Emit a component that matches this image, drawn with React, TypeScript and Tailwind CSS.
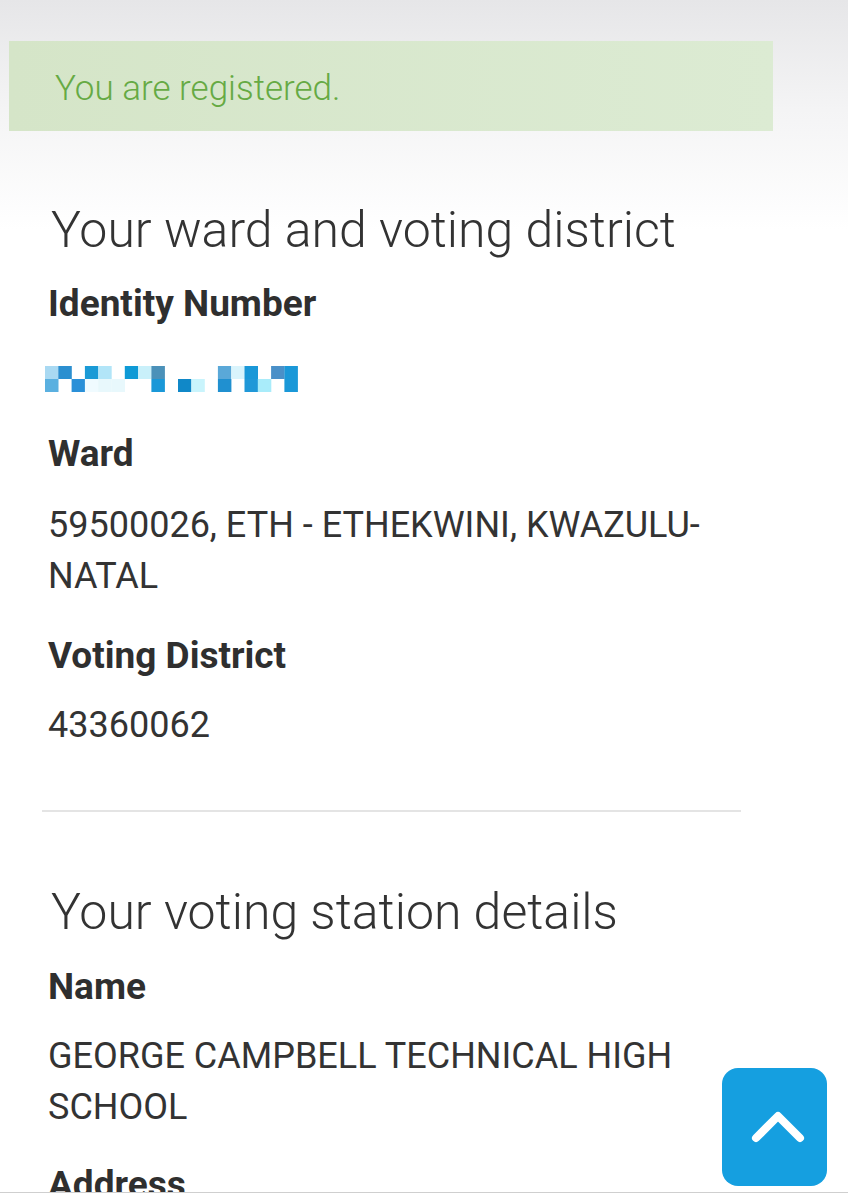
const idPixels: [number, number, string][] = [
  // [column, row, colour]
  [0, 0, "#a9d9f2"], [1, 0, "#2b8fd0"], [3, 0, "#1a9ad6"], [4, 0, "#b2e5f8"], [6, 0, "#0e9ad6"],
  [7, 0, "#c9f0fa"], [8, 0, "#4b91b9"], [13, 0, "#5aa8d8"], [14, 0, "#d9f4fc"], [15, 0, "#1a98d8"],
  [17, 0, "#4a90c8"], [18, 0, "#1a98d8"],
  [0, 1, "#5ab0e0"], [2, 1, "#2a90d8"], [3, 1, "#f0fbff"], [4, 1, "#e8f8fc"], [5, 1, "#e8f8fc"],
  [8, 1, "#1a98d8"], [10, 1, "#1088c8"], [11, 1, "#c9f4fc"], [13, 1, "#2090d0"], [15, 1, "#2098d8"],
  [16, 1, "#a9ecfa"], [18, 1, "#1a98d8"],
]

function BlurredId() {
  return (
    <svg width="254" height="26" viewBox="0 0 254 26" className="block">
      {idPixels.map(([c, r, fill], i) => (
        <rect key={i} x={c * 13.3} y={r * 13} width="13.5" height="13" fill={fill} />
      ))}
    </svg>
  )
}

function Field({ label, children, top }: { label: string; children: React.ReactNode; top: string }) {
  return (
    <div className={top}>
      <h3 className="text-[37px] leading-[40px] font-bold text-[#2f2f2f]">{label}</h3>
      {children}
    </div>
  )
}

export default function App() {
  return (
    <div
      className="relative w-[848px] h-[1200px] overflow-hidden bg-white bg-[linear-gradient(to_bottom,#e6e6e8_0px,#f4f4f5_110px,#ffffff_230px)]"
      style={{ fontFamily: "Roboto, 'Liberation Sans', sans-serif" }}
    >
      <div className="h-[1193px] overflow-hidden border-b border-[#cfcfcf]">
        <div className="pt-[41px] pl-[9px]">
          <div className="w-[764px] h-[90px] flex items-center pl-[46px] pt-[6px] bg-gradient-to-r from-[#d5e5c8] to-[#dcebd3]">
            <p className="text-[35px] font-light text-[#66aa44]">You are registered.</p>
          </div>
        </div>

        <main className="pl-[48px] w-[741px]">
          <h2 className="mt-[71px] text-[50px] leading-[56px] font-light text-[#333] pl-[3px]">
            Your ward and voting district
          </h2>

          <Field label="Identity Number" top="mt-[26px]">
            <div className="mt-[42px] h-[26px] -ml-[3px]">
              <BlurredId />
            </div>
          </Field>

          <Field label="Ward" top="mt-[42px]">
            <p className="mt-[26px] text-[36px] leading-[51px] text-[#333]">
              59500026, ETH - ETHEKWINI, KWAZULU-NATAL
            </p>
          </Field>

          <Field label="Voting District" top="mt-[34px]">
            <p className="mt-[24px] text-[36px] leading-[51px] text-[#333]">43360062</p>
          </Field>
        </main>

        <hr className="mt-[59px] ml-[42px] w-[699px] border-0 border-t-2 border-[#e4e4e4]" />

        <section className="pl-[48px] w-[741px]">
          <h2 className="mt-[72px] text-[50px] leading-[56px] font-light text-[#333] pl-[3px]">
            Your voting station details
          </h2>

          <Field label="Name" top="mt-[27px]">
            <p className="mt-[24px] text-[36px] leading-[51px] text-[#333]">
              GEORGE CAMPBELL TECHNICAL HIGH SCHOOL
            </p>
          </Field>

          <Field label="Address" top="mt-[32px]">
            <p className="mt-[24px] text-[36px] leading-[51px] text-[#333]">&nbsp;</p>
          </Field>
        </section>
      </div>

      <button className="absolute left-[722px] top-[1068px] w-[105px] h-[118px] rounded-[16px] bg-[#159fe0] flex items-center justify-center">
        <svg width="54" height="32" viewBox="0 0 54 32" fill="none" className="ml-[6px]">
          <path d="M5 27 L27 5 L49 27" stroke="white" strokeWidth="8" strokeLinecap="round" strokeLinejoin="round" />
        </svg>
      </button>
    </div>
  )
}
